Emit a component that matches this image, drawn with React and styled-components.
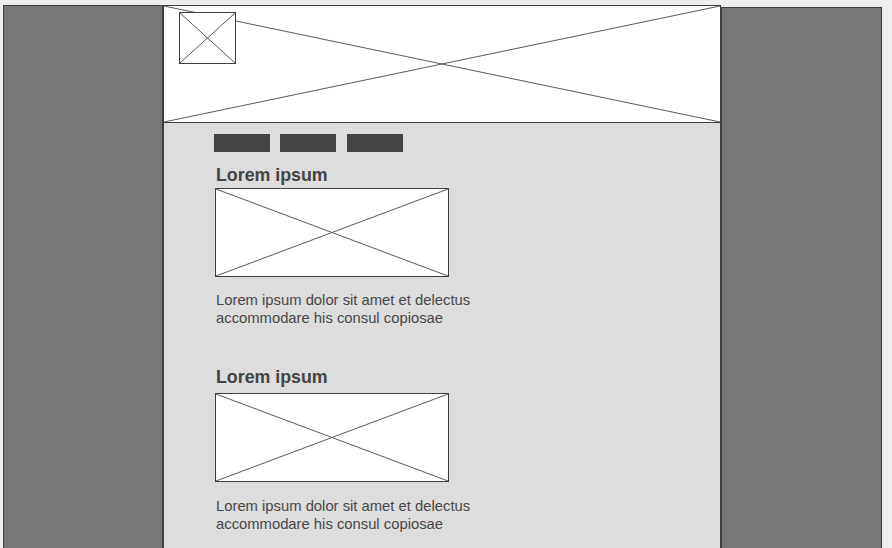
import React from 'react';
import styled, { createGlobalStyle } from 'styled-components';

const GlobalStyle = createGlobalStyle`
  html, body {
    margin: 0;
    padding: 0;
    background: #eeeeee;
    overflow: hidden;
  }

  body {
    font-family: "Liberation Sans", Arial, sans-serif;
    color: #444444;
  }
`;

const Cross = () => (
    <CrossSvg preserveAspectRatio="none" viewBox="0 0 100 100">
        <line x1="0" y1="0" x2="100" y2="100" vectorEffect="non-scaling-stroke" />
        <line x1="100" y1="0" x2="0" y2="100" vectorEffect="non-scaling-stroke" />
    </CrossSvg>
);

const Article = ({ headingGap, textGap, top }) => (
    <Section $top={top}>
        <Heading $gap={headingGap}>Lorem ipsum</Heading>
        <Placeholder>
            <Cross />
        </Placeholder>
        <Text $gap={textGap}>
            Lorem ipsum dolor sit amet et delectus
            <br />
            accommodare his consul copiosae
        </Text>
    </Section>
);

const App = () => {
    return (
        <>
            <GlobalStyle />
            <Page>
                <SidePanel />

                <Column>
                    <Header>
                        <Cross />
                        <Logo>
                            <Cross />
                        </Logo>
                    </Header>

                    <Content>
                        <Nav>
                            <NavButton />
                            <NavButton />
                            <NavButton />
                        </Nav>

                        <Article top={13} headingGap={2} textGap={14} />
                        <Article top={40} headingGap={5} textGap={15} />
                    </Content>
                </Column>

                <SidePanel $offset={2} $wide />
            </Page>
        </>
    );
};

const Page = styled.div`
    display: flex;
    align-items: flex-start;
    padding: 5px 0 0 3px;
    height: 548px;
    overflow: hidden;
    box-sizing: border-box;
`;

const SidePanel = styled.div`
    width: ${p => (p.$wide ? 161 : 160)}px;
    height: 620px;
    margin-top: ${p => p.$offset || 0}px;
    background: #777777;
    border: 1px solid #3f3f3f;
    box-sizing: border-box;
    flex-shrink: 0;
`;

const Column = styled.div`
    width: 558px;
    flex-shrink: 0;
    display: flex;
    flex-direction: column;
`;

const CrossSvg = styled.svg`
    position: absolute;
    inset: 0;
    width: 100%;
    height: 100%;
    stroke: #5a5a5a;
    stroke-width: 1;
    pointer-events: none;
`;

const Header = styled.header`
    position: relative;
    height: 118px;
    box-sizing: border-box;
    background: #ffffff;
    border: 1px solid #3f3f3f;
    padding: 6px 0 0 15px;
`;

const Logo = styled.div`
    position: relative;
    width: 57px;
    height: 52px;
    box-sizing: border-box;
    background: #ffffff;
    border: 1px solid #3f3f3f;
`;

const Content = styled.main`
    background: #dddddd;
    border-left: 1px solid #3f3f3f;
    border-right: 1px solid #3f3f3f;
    height: 560px;
    padding: 11px 0 0 50px;
    box-sizing: border-box;
`;

const Nav = styled.nav`
    display: flex;
    gap: 10px;

    & > div:last-child {
        margin-left: 1px;
    }
`;

const NavButton = styled.div`
    width: 56px;
    height: 18px;
    background: #444444;
`;

const Section = styled.section`
    margin-top: ${p => p.$top}px;
    padding-left: 1px;
`;

const Heading = styled.h2`
    margin: 0 0 ${p => p.$gap}px;
    padding-left: 1px;
    font-size: 17.8px;
    line-height: 21px;
    font-weight: bold;
    color: #444444;
`;

const Placeholder = styled.div`
    position: relative;
    width: 234px;
    height: 89px;
    box-sizing: border-box;
    background: #ffffff;
    border: 1px solid #3f3f3f;
`;

const Text = styled.p`
    margin: ${p => p.$gap}px 0 0;
    padding-left: 1px;
    font-size: 14.8px;
    line-height: 18px;
    color: #484848;
`;

export default App;
